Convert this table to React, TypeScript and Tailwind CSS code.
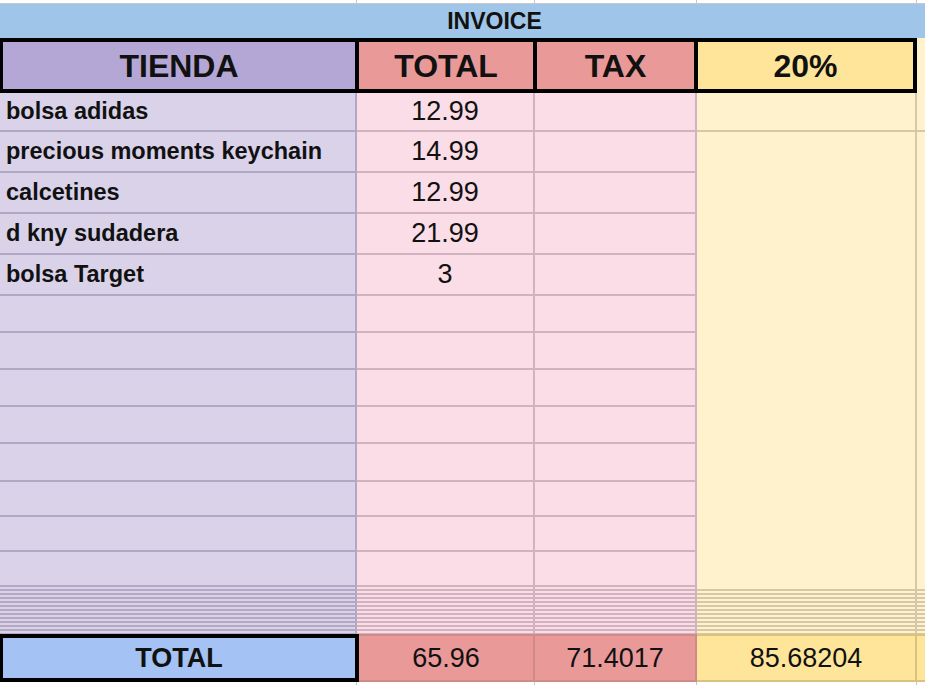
const items = [
  { h: 'h-[39px]', name: 'bolsa adidas', total: '12.99', line: true },
  { h: 'h-[41px]', name: 'precious moments keychain', total: '14.99', line: false },
  { h: 'h-[41px]', name: 'calcetines', total: '12.99', line: false },
  { h: 'h-[41px]', name: 'd kny sudadera', total: '21.99', line: false },
  { h: 'h-[41px]', name: 'bolsa Target', total: '3', line: false },
  { h: 'h-[37px]', name: '', total: '', line: false },
  { h: 'h-[37px]', name: '', total: '', line: false },
  { h: 'h-[37px]', name: '', total: '', line: false },
  { h: 'h-[37px]', name: '', total: '', line: false },
  { h: 'h-[38px]', name: '', total: '', line: false },
  { h: 'h-[35px]', name: '', total: '', line: false },
  { h: 'h-[35px]', name: '', total: '', line: false },
  { h: 'h-[35px]', name: '', total: '', line: false },
]

export default function App() {
  return (
    <div className="w-[925px] h-[685px] overflow-hidden bg-white font-['Liberation_Sans',Arial,sans-serif] text-[#111]">
      {/* sheet top edge */}
      <div className="flex h-[4px] border-b border-[#c8c8c8]">
        <div className="w-[357px] border-r border-[#c8c8c8]" />
        <div className="w-[178px] border-r border-[#c8c8c8]" />
        <div className="w-[162px] border-r border-[#c8c8c8]" />
        <div className="w-[220px] border-r border-[#c8c8c8]" />
        <div className="flex-1" />
      </div>

      {/* banner */}
      <div className="h-[34px] bg-[#9fc5e8] pl-[64px] flex items-center justify-center text-[23px] font-bold leading-none">
        INVOICE
      </div>

      {/* header */}
      <div className="flex h-[55px] text-[32px] font-bold leading-none">
        <div className="w-[359px] bg-[#b4a7d6] border-y-4 border-l-[3px] border-r-4 border-black flex items-center justify-center">
          TIENDA
        </div>
        <div className="w-[178px] bg-[#ea9999] border-y-4 border-r-4 border-black flex items-center justify-center">
          TOTAL
        </div>
        <div className="w-[161px] bg-[#ea9999] border-y-4 border-r-4 border-black flex items-center justify-center">
          TAX
        </div>
        <div className="w-[219px] bg-[#ffe599] border-y-4 border-r-4 border-black flex items-center justify-center">
          20%
        </div>
        <div className="flex-1 bg-[#fff2cc]" />
      </div>

      {/* rows */}
      {items.map((r, i) => (
        <div key={i} className={`flex ${r.h}`}>
          <div className="w-[357px] bg-[#d9d2e9] border-r-2 border-b-2 border-[#b2a8c4] pl-[6px] flex items-center text-[23.5px] font-bold leading-none">
            {r.name}
          </div>
          <div className="w-[178px] bg-[#fbdde8] border-r-2 border-b-2 border-[#d1b2be] flex items-center justify-center text-[27px] leading-none">
            {r.total}
          </div>
          <div className="w-[162px] bg-[#fbdde8] border-r-2 border-b-2 border-[#d1b2be]" />
          <div
            className={
              r.line
                ? 'w-[220px] bg-[#fff2cc] border-r-2 border-b-2 border-[#d6c7a6]'
                : 'w-[220px] bg-[#fff2cc] border-r-2 border-[#d6c7a6]'
            }
          />
          <div className={r.line ? 'flex-1 bg-[#fff2cc] border-b-2 border-[#d6c7a6]' : 'flex-1 bg-[#fff2cc]'} />
        </div>
      ))}

      {/* collapsed rows */}
      <div className="flex h-[47px]">
        <div className="w-[357px] border-r-2 border-[#b2a8c4] bg-[repeating-linear-gradient(to_bottom,#d9d2e9_0px,#d9d2e9_2px,#b2a8c4_2px,#b2a8c4_4px)]" />
        <div className="w-[178px] border-r-2 border-[#d1b2be] bg-[repeating-linear-gradient(to_bottom,#fbdde8_0px,#fbdde8_2px,#d1b2be_2px,#d1b2be_4px)]" />
        <div className="w-[162px] border-r-2 border-[#d1b2be] bg-[repeating-linear-gradient(to_bottom,#fbdde8_0px,#fbdde8_2px,#d1b2be_2px,#d1b2be_4px)]" />
        <div className="w-[220px] border-r-2 border-[#d6c7a6] bg-[repeating-linear-gradient(to_bottom,#fff2cc_0px,#fff2cc_2px,#d6c7a6_2px,#d6c7a6_4px)]" />
        <div className="flex-1 bg-[repeating-linear-gradient(to_bottom,#fff2cc_0px,#fff2cc_2px,#d6c7a6_2px,#d6c7a6_4px)]" />
      </div>

      {/* totals */}
      <div className="flex h-[48px] leading-none">
        <div className="w-[359px] bg-[#a4c2f4] border-4 border-l-[3px] border-black flex items-center justify-center text-[27px] font-bold">
          TOTAL
        </div>
        <div className="w-[176px] bg-[#ea9999] border-y-2 border-r-2 border-[#cf8a8a] flex items-center justify-center text-[27px]">
          65.96
        </div>
        <div className="w-[162px] bg-[#ea9999] border-y-2 border-r-2 border-[#cf8a8a] flex items-center justify-center text-[27px]">
          71.4017
        </div>
        <div className="w-[220px] bg-[#ffe599] border-y-2 border-r-2 border-[#d9c27e] flex items-center justify-center text-[27px]">
          85.68204
        </div>
        <div className="flex-1 bg-[#ffe599] border-y-2 border-[#d9c27e]" />
      </div>

      {/* below sheet */}
      <div className="flex h-[3px]">
        <div className="w-[357px] border-r border-[#c8c8c8]" />
        <div className="w-[178px] border-r border-[#c8c8c8]" />
        <div className="w-[162px] border-r border-[#c8c8c8]" />
        <div className="w-[220px] border-r border-[#c8c8c8]" />
        <div className="flex-1" />
      </div>
    </div>
  )
}
